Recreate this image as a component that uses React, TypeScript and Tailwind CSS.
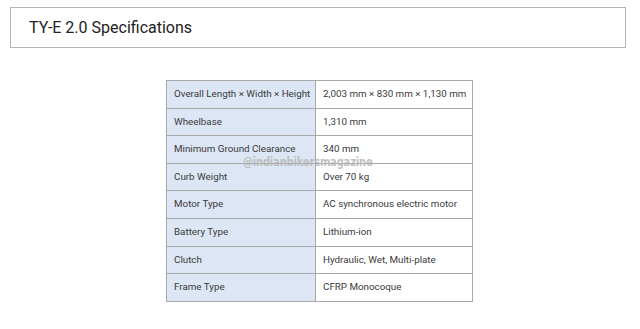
const specs: [string, string][] = [
  ["Overall Length × Width × Height", "2,003 mm × 830 mm × 1,130 mm"],
  ["Wheelbase", "1,310 mm"],
  ["Minimum Ground Clearance", "340 mm"],
  ["Curb Weight", "Over 70 kg"],
  ["Motor Type", "AC synchronous electric motor"],
  ["Battery Type", "Lithium-ion"],
  ["Clutch", "Hydraulic, Wet, Multi-plate"],
  ["Frame Type", "CFRP Monocoque"],
];

export default function App() {
  return (
    <div className="w-[640px] h-[329px] bg-white font-['Roboto',sans-serif] overflow-hidden">
      <div className="pt-[7px] pl-[10px] pr-[14px]">
        <div className="h-[41px] border border-[#b5b5b5] flex items-center pl-[18px] text-[16px] text-[#222]">
          TY-E 2.0 Specifications
        </div>
      </div>

      <div className="relative mt-[32px] pl-[166px]">
        <table className="table-fixed w-[306px] border-collapse border border-[#a8a8a8] text-[9.8px] text-[#3a3a3a]">
          <colgroup>
            <col className="w-[149px]" />
            <col className="w-[157px]" />
          </colgroup>
          <tbody>
            {specs.map(([label, value]) => (
              <tr key={label} className="h-[27.6px]">
                <td className="bg-[#dde6f4] border border-[#a8a8a8] pl-[7px] whitespace-nowrap">
                  {label}
                </td>
                <td className="border border-[#a8a8a8] pl-[7px] whitespace-nowrap">
                  {value}
                </td>
              </tr>
            ))}
          </tbody>
        </table>
        <div className="absolute left-[243px] top-[75px] leading-[14px] text-[13px] font-bold tracking-[-0.2px] text-[#b8b8b8]/90 font-['DejaVu_Sans_Condensed','DejaVu_Sans',sans-serif] scale-x-[0.85] origin-left">
          @indianbikersmagazine
        </div>
      </div>
    </div>
  );
}
